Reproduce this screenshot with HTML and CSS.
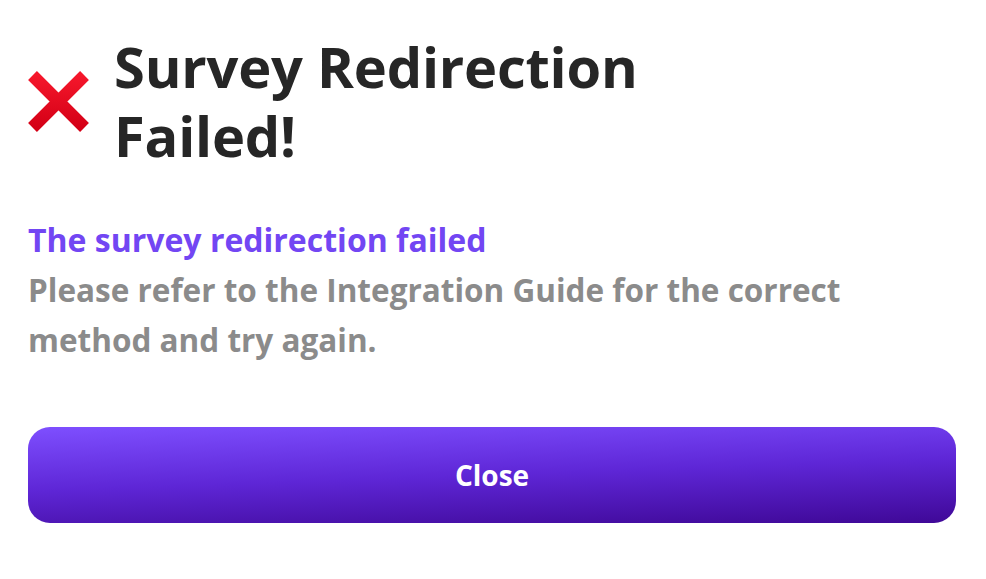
FILE: index.html
```html
<!DOCTYPE html>
<html lang="en">
<head>
<meta charset="utf-8">
<title>Survey Redirection Failed</title>
<link rel="stylesheet" href="styles.css">
</head>
<body>
<main class="page">
  <header class="header">
    <svg class="icon" viewBox="0 0 61 61" aria-hidden="true">
      <defs>
        <linearGradient id="xg" x1="0" y1="0" x2="0" y2="1">
          <stop offset="0" stop-color="#f5172b"/>
          <stop offset="1" stop-color="#d40016"/>
        </linearGradient>
      </defs>
      <path d="M4.5 4.5 L56.5 56.5 M56.5 4.5 L4.5 56.5" stroke="url(#xg)" stroke-width="12.5" stroke-linecap="butt" fill="none"/>
    </svg>
    <h1 class="title">Survey Redirection<br>Failed!</h1>
  </header>
  <section class="message">
    <p class="subtitle">The survey redirection failed</p>
    <p class="text">Please refer to the Integration Guide for the correct method and try again.</p>
  </section>
  <button class="close-btn" type="button">Close</button>
</main>
</body>
</html>
```
FILE: styles.css
```css
* { box-sizing: border-box; }
html, body { margin: 0; padding: 0; background: #ffffff; }
body {
  font-family: "Open Sans", Lato, sans-serif;
  font-variant-ligatures: none;
}

.page {
  display: flex;
  flex-direction: column;
  padding: 32px 30px 0 28px;
}

.header {
  display: flex;
  align-items: center;
  gap: 25px;
}

.icon {
  width: 61px;
  height: 61px;
  flex: none;
}

.title {
  margin: 0;
  font-size: 56px;
  line-height: 69px;
  font-weight: 700;
  letter-spacing: -0.2px;
  color: #262626;
}

.message {
  margin-top: 45px;
}

.subtitle {
  margin: 0;
  font-size: 32px;
  line-height: 50px;
  font-weight: 700;
  color: #7246f3;
}

.text {
  margin: 0;
  font-size: 31.5px;
  line-height: 50px;
  font-weight: 700;
  color: #8b8b8b;
}

.close-btn {
  margin-top: 62px;
  width: 100%;
  height: 96px;
  border: none;
  border-radius: 22px;
  background: linear-gradient(178deg, #7e4fff 0%, #5e26d6 50%, #3f0897 100%);
  color: #ffffff;
  font-family: "Open Sans", Lato, sans-serif;
  font-size: 28px;
  font-weight: 700;
  cursor: pointer;
}
```
